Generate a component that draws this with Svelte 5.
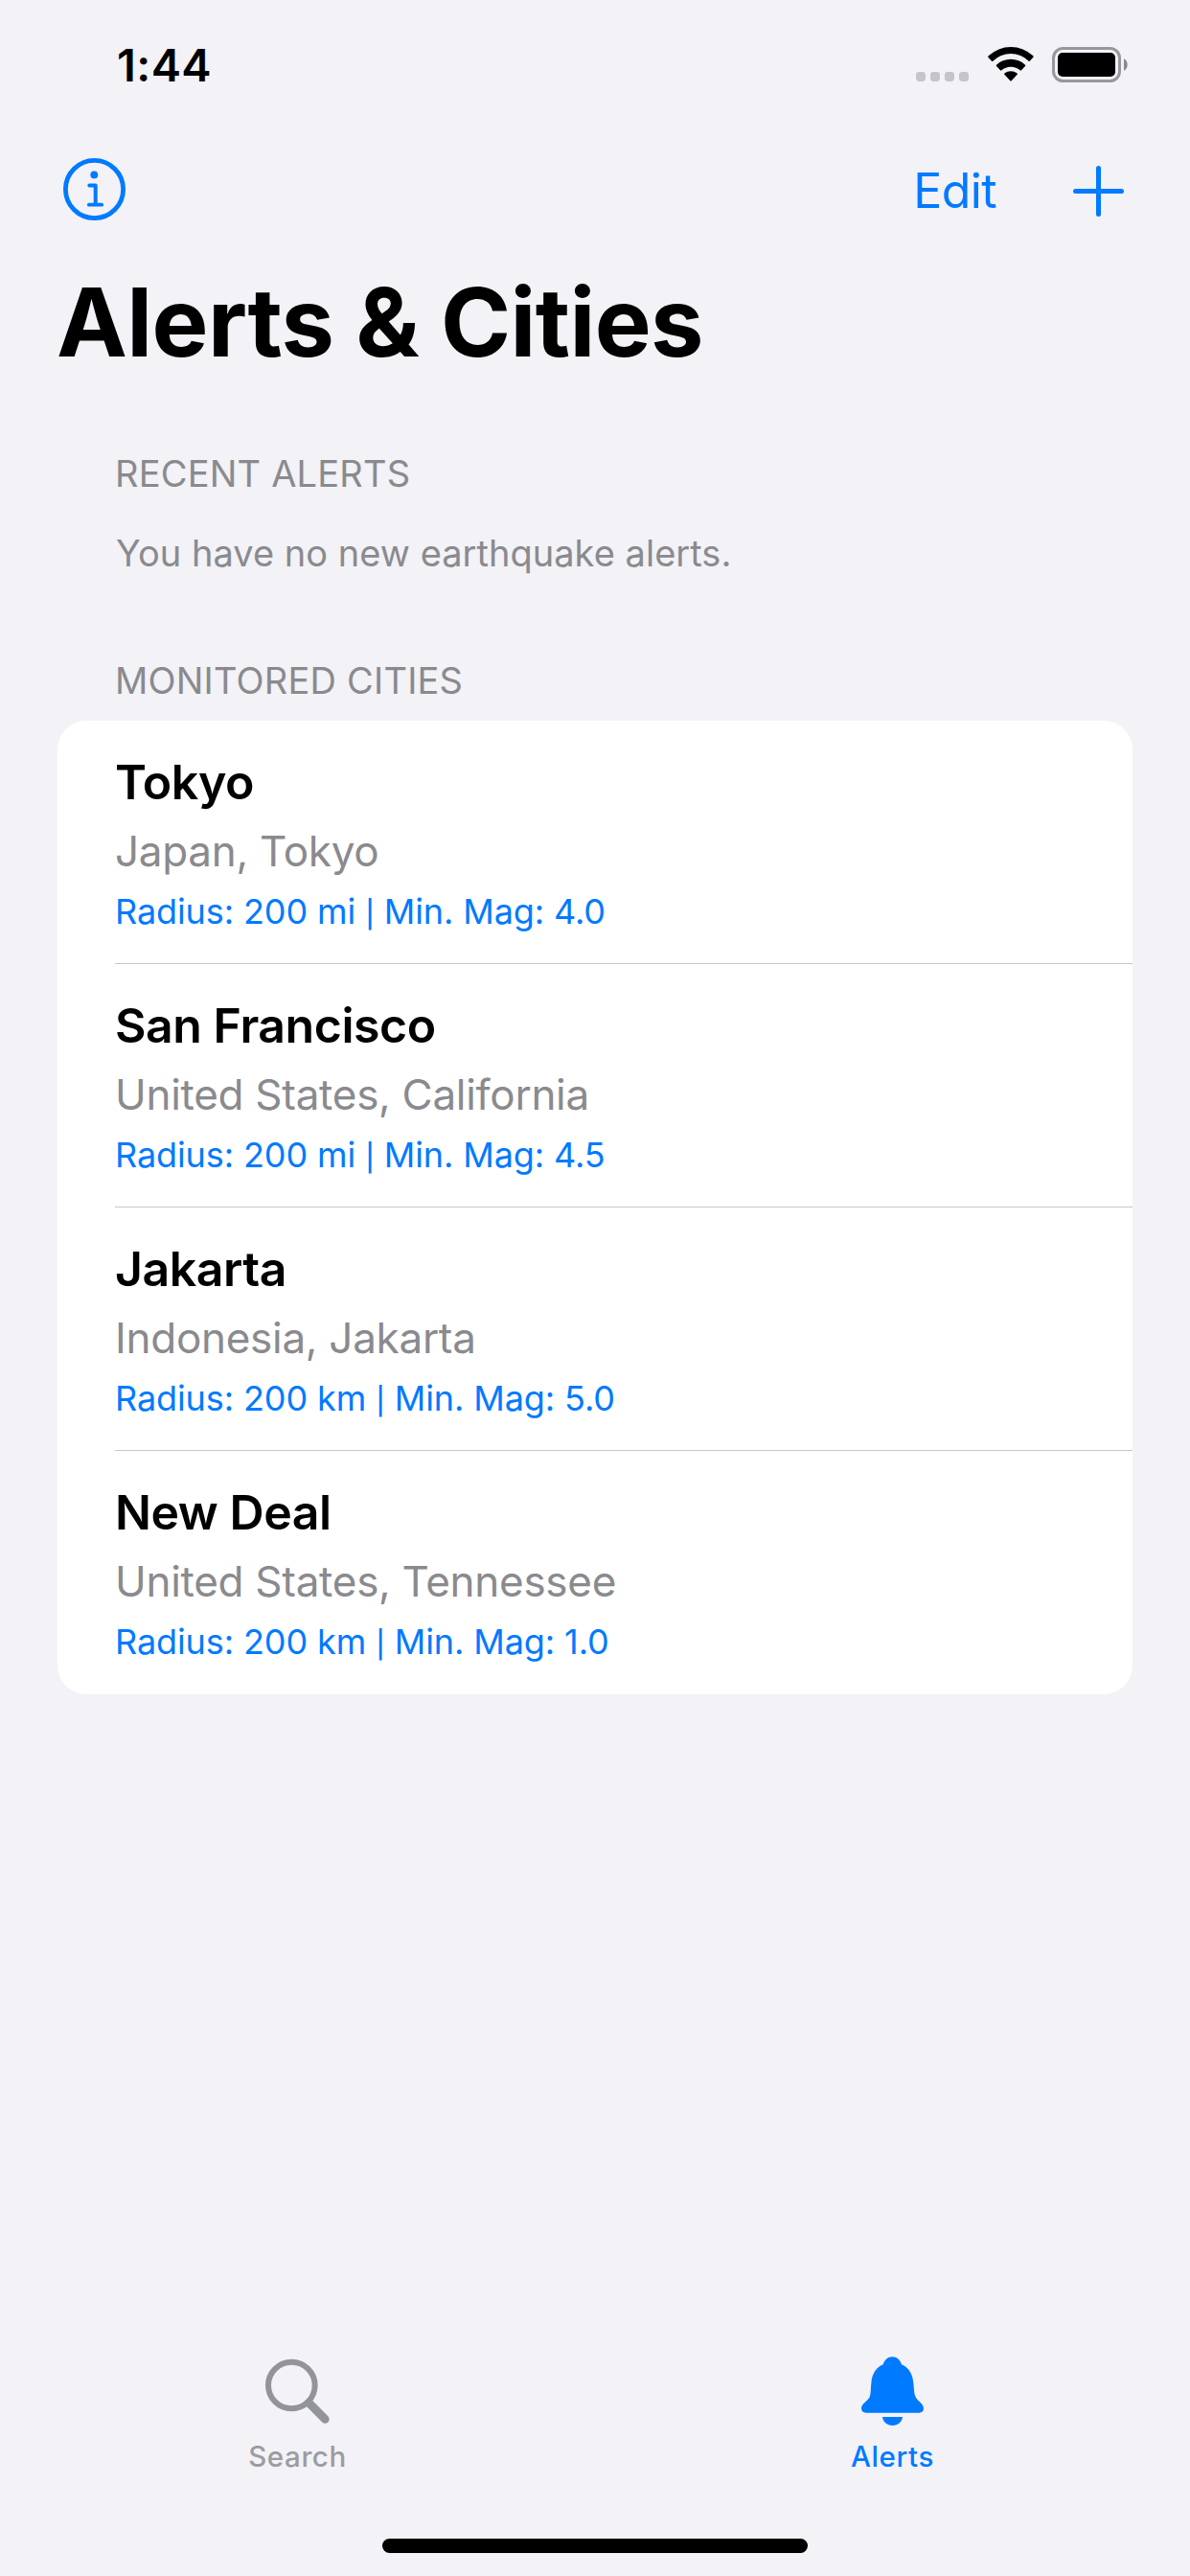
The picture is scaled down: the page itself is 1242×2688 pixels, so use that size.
<script>
  const cities = [
    { name: 'Tokyo', region: 'Japan, Tokyo', radius: '200 mi', magnitude: '4.0' },
    { name: 'San Francisco', region: 'United States, California', radius: '200 mi', magnitude: '4.5' },
    { name: 'Jakarta', region: 'Indonesia, Jakarta', radius: '200 km', magnitude: '5.0' },
    { name: 'New Deal', region: 'United States, Tennessee', radius: '200 km', magnitude: '1.0' }
  ];
</script>

<div class="screen">
  <header class="status">
    <span class="time">1:44</span>
    <div class="indicators">
      <svg class="signal" viewBox="0 0 55 10">
        <rect x="0" width="10" height="10" rx="3.4" />
        <rect x="15" width="10" height="10" rx="3.4" />
        <rect x="30" width="10" height="10" rx="3.4" />
        <rect x="45" width="10" height="10" rx="3.4" />
      </svg>
      <svg class="wifi" viewBox="0 0 144 108">
        <path d="M1 32Q0 30 2 28A102 102 0 0 1 142 28Q144 30 142 32L131 44Q130 46 128 44A80 80 0 0 0 16 44Q14 46 12 44Z" />
        <path d="M27 60Q25 58 27 56A66 66 0 0 1 117 56Q119 58 117 60L105 73Q103 75 101 73A44 44 0 0 0 43 73Q41 75 39 73Z" />
        <path d="M52 86Q50 84 53 82A31 31 0 0 1 91 82Q94 84 92 86L74 106Q72 108 70 106Z" />
      </svg>
      <svg class="battery" viewBox="0 0 80 37">
        <rect class="shell" x="1.5" y="1.5" width="69" height="34" rx="10" />
        <rect x="6" y="6" width="60" height="25" rx="5" />
        <path class="nub" d="M75 12A7.6 7.6 0 0 1 75 25Z" />
      </svg>
    </div>
  </header>

  <nav class="toolbar">
    <svg class="info" viewBox="0 0 65 65">
      <circle class="ring" cx="32.5" cy="32.5" r="30.1" />
      <circle class="dot" cx="32.3" cy="17.4" r="3.9" />
      <path class="stem" d="M27.3 28.5H33.7V47" />
      <path class="foot" d="M26.8 48.7H40.2" />
    </svg>
    <div class="actions">
      <span class="edit">Edit</span>
      <svg class="plus" viewBox="0 0 53 53"><path d="M2.5 26.5H50.5M26.5 2.5V50.5" /></svg>
    </div>
  </nav>

  <h1>Alerts &amp; Cities</h1>

  <main>
    <h2>RECENT ALERTS</h2>
    <p class="empty">You have no new earthquake alerts.</p>
    <h2 class="monitored">MONITORED CITIES</h2>
    <ul class="card">
      {#each cities as city}
        <li>
          <h3>{city.name}</h3>
          <p class="region">{city.region}</p>
          <p class="detail">Radius: {city.radius} <span class="bar">|</span> Min. Mag: {city.magnitude}</p>
        </li>
      {/each}
    </ul>
  </main>

  <footer>
    <div class="tabs">
      <div class="tab">
        <svg viewBox="165 78 213 228">
          <circle class="lens" cx="253" cy="177" r="73" />
          <path class="handle" d="M308 233L358 283" />
        </svg>
        <span class="label search">Search</span>
      </div>
      <div class="tab active">
        <svg viewBox="168 78 213 228">
          <path d="M245 112C249 98 260 88 274 88S299 98 303 112C325 121 338 142 340 170C342 190 342 203 347 214C353 227 372 234 372 250C372 258 366 263 358 263H191C183 263 177 258 177 250C177 234 197 227 203 214C207 203 206 190 208 170C210 142 223 121 245 112Z" />
          <path d="M243 276H306C304 292 291 303 274.500 303S245 292 243 276Z" />
        </svg>
        <span class="label">Alerts</span>
      </div>
    </div>
    <div class="home"></div>
  </footer>
</div>

<style>
  :global(body) { background: #f2f2f7; }
  .screen {
    box-sizing: border-box;
    display: flex;
    flex-direction: column;
    width: 1242px;
    height: 2688px;
    overflow: hidden;
    background: #f2f2f7;
    color: #000;
    font-family: Inter, "Liberation Sans", sans-serif;
  }
  h1, h2, h3, p, ul { margin: 0; padding: 0; font-weight: 400; }
  svg { display: block; flex: none; }
  .status {
    display: flex;
    justify-content: space-between;
    height: 132px;
    padding: 0 64px 0 122px;
  }
  .time { margin-top: 39px; font-size: 47px; line-height: 58px; font-weight: 600; letter-spacing: 0.4px; }
  .indicators { display: flex; margin-top: 49px; }
  .signal { width: 55px; height: 10px; margin: 26px 19.5px 0 0; fill: #c4c4c9; }
  .wifi { width: 48px; height: 36px; margin-right: 19.5px; }
  .battery { width: 80px; height: 37px; }
  .shell { fill: none; stroke: #98989c; stroke-width: 3; }
  .nub { fill: #88888b; }
  .toolbar {
    display: flex;
    justify-content: space-between;
    align-items: center;
    height: 132px;
    padding: 0 69px 0 66px;
    color: #007aff;
  }
  .info { width: 65px; height: 65px; margin-bottom: 1px; fill: none; stroke: currentColor; }
  .ring { stroke-width: 4.8; }
  .dot { fill: currentColor; stroke: none; }
  .stem { stroke-width: 4; stroke-linecap: round; stroke-linejoin: round; }
  .foot { stroke-width: 3.8; stroke-linecap: round; }
  .actions { display: flex; align-items: center; gap: 80px; }
  .edit { padding-top: 2px; font-size: 50px; line-height: 60px; letter-spacing: -0.6px; }
  .plus { width: 53px; height: 53px; margin-top: 2px; fill: none; stroke: currentColor; stroke-width: 5; stroke-linecap: round; }
  h1 { padding: 12px 0 0 59px; font-size: 99px; line-height: 120px; font-weight: 700; letter-spacing: -0.6px; }
  main { flex: 1; padding: 74px 60px 0; }
  h2, .empty { padding-left: 60px; color: #8a8a8e; font-size: 38px; line-height: 48px; letter-spacing: 0.2px; }
  .empty { margin-top: 35px; padding-left: 61px; letter-spacing: 0.03px; }
  .monitored { margin-top: 85px; }
  .card { margin-top: 18px; border-radius: 30px; background: #fff; list-style: none; }
  li { box-sizing: border-box; height: 254px; margin-left: 60px; padding-top: 34px; border-bottom: 1px solid #c6c6c8; }
  li:last-child { border: 0; }
  h3 { font-size: 50px; line-height: 60px; font-weight: 600; letter-spacing: -0.45px; }
  .region { margin-top: 12px; color: #8a8a8e; font-size: 44px; line-height: 60px; letter-spacing: -0.28px; }
  .detail { margin-top: 8px; color: #007aff; font-size: 36px; line-height: 50px; letter-spacing: -0.1px; }
  .bar { font-size: 28px; font-weight: 500; }
  footer { height: 232px; }
  .tabs { display: flex; height: 193px; }
  .tab { display: flex; flex: 1; flex-direction: column; align-items: center; color: #929497; }
  .tab svg { width: 71px; height: 76px; fill: currentColor; }
  .tab .lens { fill: none; stroke: currentColor; stroke-width: 18; }
  .handle { stroke: currentColor; stroke-width: 26; stroke-linecap: round; }
  .label { margin-top: 13px; font-size: 29.5px; line-height: 36px; font-weight: 500; letter-spacing: 0.6px; }
  .search { color: #9c9ca0; }
  .tab.active { color: #007aff; }
  .home { width: 444px; height: 15px; margin: 0 auto; border-radius: 8px; background: #000; }
</style>
